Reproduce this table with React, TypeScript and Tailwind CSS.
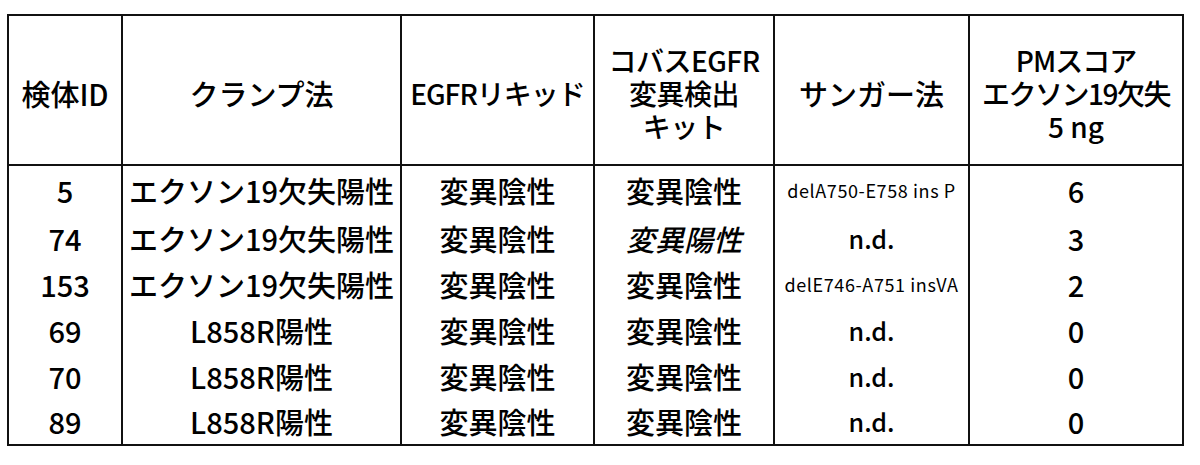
const rows = [
  { id: '5', clamp: 'エクソン19欠失陽性', liquid: '変異陰性', cobas: '変異陰性', sanger: 'delA750-E758 ins P', small: true, pm: '6' },
  { id: '74', clamp: 'エクソン19欠失陽性', liquid: '変異陰性', cobas: '変異陽性', italic: true, sanger: 'n.d.', pm: '3' },
  { id: '153', clamp: 'エクソン19欠失陽性', liquid: '変異陰性', cobas: '変異陰性', sanger: 'delE746-A751 insVA', small: true, pm: '2' },
  { id: '69', clamp: 'L858R陽性', liquid: '変異陰性', cobas: '変異陰性', sanger: 'n.d.', pm: '0' },
  { id: '70', clamp: 'L858R陽性', liquid: '変異陰性', cobas: '変異陰性', sanger: 'n.d.', pm: '0' },
  { id: '89', clamp: 'L858R陽性', liquid: '変異陰性', cobas: '変異陰性', sanger: 'n.d.', pm: '0' },
]

const font = { fontFamily: '"Noto Sans CJK JP", "Noto Sans", sans-serif' }

export default function App() {
  return (
    <div className="w-[1200px] h-[465px] bg-white pt-[14px] pl-[7px]" style={font}>
      <table className="table-fixed border-collapse border-2 border-[#111] text-black text-[29px] font-medium leading-[33px]">
        <colgroup>
          <col className="w-[114px]" />
          <col className="w-[279px]" />
          <col className="w-[193px]" />
          <col className="w-[180px]" />
          <col className="w-[195px]" />
          <col className="w-[214px]" />
        </colgroup>
        <thead>
          <tr className="h-[150px] border-b-2 border-[#111]">
            <th className="border-r-2 border-[#111] font-medium pt-[6px]">検体ID</th>
            <th className="border-r-2 border-[#111] font-medium pt-[6px]">クランプ法</th>
            <th className="border-r-2 border-[#111] font-medium pt-[6px] tracking-[-1px] text-[28px]">EGFRリキッド</th>
            <th className="border-r-2 border-[#111] font-medium pt-[6px] text-[28px] tracking-[-0.5px]">
              <div>コバスEGFR</div>
              <div>変異検出</div>
              <div>キット</div>
            </th>
            <th className="border-r-2 border-[#111] font-medium pt-[6px]">サンガー法</th>
            <th className="font-medium pt-[6px] text-[28px]">
              <div className="tracking-[-1px]">PMスコア</div>
              <div className="tracking-[-1.5px]">エクソン19欠失</div>
              <div>5 ng</div>
            </th>
          </tr>
        </thead>
        <tbody>
          {rows.map((r, i) => (
            <tr key={r.id} className={i === 0 ? 'h-[50px]' : 'h-[46px]'}>
              <td className="border-r-2 border-[#111] text-center">{r.id}</td>
              <td className="border-r-2 border-[#111] text-center">{r.clamp}</td>
              <td className="border-r-2 border-[#111] text-center">{r.liquid}</td>
              <td className={`border-r-2 border-[#111] text-center ${r.italic ? 'italic' : ''}`}>{r.cobas}</td>
              <td className={`border-r-2 border-[#111] text-center ${r.small ? 'text-[18px] font-normal tracking-[0.6px]' : 'text-[25px]'}`}>{r.sanger}</td>
              <td className="text-center">{r.pm}</td>
            </tr>
          ))}
        </tbody>
      </table>
    </div>
  )
}
